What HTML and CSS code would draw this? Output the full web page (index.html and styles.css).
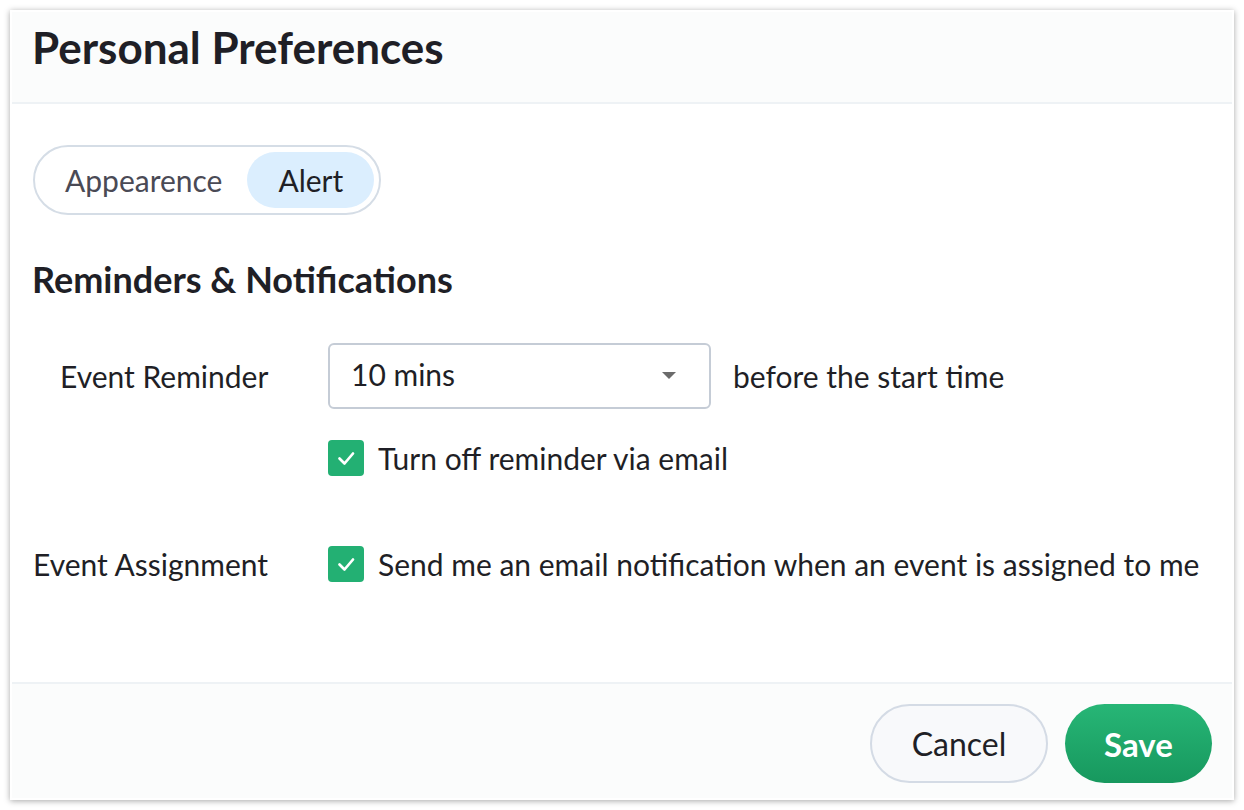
FILE: index.html
```html
<!DOCTYPE html>
<html>
<head>
<meta charset="utf-8">
<link rel="stylesheet" href="styles.css">
</head>
<body>
<div class="card">
  <div class="header"><h1 class="title">Personal Preferences</h1></div>
  <div class="body">
    <div class="tabs">
      <span class="tab">Appearence</span>
      <span class="tab active">Alert</span>
    </div>
    <h2 class="section">Reminders &amp; Notifications</h2>
    <div class="row row-reminder">
      <div class="label indent">Event Reminder</div>
      <div class="field">
        <div class="select-line">
          <div class="select"><span class="value">10 mins</span><span class="caret"></span></div>
          <span class="after">before the start time</span>
        </div>
        <div class="check-line">
          <span class="check"><svg viewBox="0 0 36 36" width="36" height="36"><path d="M11.5 18.5L16.5 23.5L25 13.5" fill="none" stroke="#fff" stroke-width="2.7" stroke-linecap="round" stroke-linejoin="round"/></svg></span>
          <span class="check-text">Turn off reminder via email</span>
        </div>
      </div>
    </div>
    <div class="row row-assign">
      <div class="label">Event Assignment</div>
      <div class="check-line">
        <span class="check"><svg viewBox="0 0 36 36" width="36" height="36"><path d="M11.5 18.5L16.5 23.5L25 13.5" fill="none" stroke="#fff" stroke-width="2.7" stroke-linecap="round" stroke-linejoin="round"/></svg></span>
        <span class="check-text">Send me an email notification when an event is assigned to me</span>
      </div>
    </div>
  </div>
  <div class="footer">
    <button class="btn cancel">Cancel</button>
    <button class="btn save">Save</button>
  </div>
</div>
</body>
</html>
```
FILE: styles.css
```css
* { box-sizing: border-box; }
html, body { margin: 0; padding: 0; background: #ffffff; }
body { font-family: Lato, "Noto Sans", sans-serif; color: #1f1f26; }

.card {
  margin: 10px;
  width: 1224px;
  height: 790px;
  background: #fff;
  padding: 2px;
  display: flex;
  flex-direction: column;
  box-shadow: 0 1px 6px rgba(0,0,0,0.35);
}

.header {
  height: 92px;
  flex: none;
  background: #fbfcfc;
  border-bottom: 2px solid #eef2f5;
  padding: 0 20px;
}
.title {
  margin: 9px 0 0;
  font-size: 44px;
  font-weight: 700;
  line-height: 52px;
  color: #1f1f26;
}

.body {
  flex: 1;
  padding: 41px 21px 0;
}

.tabs {
  display: inline-flex;
  align-items: center;
  height: 70px;
  border: 2px solid #d5dde6;
  border-radius: 35px;
  padding: 0 5px;
}
.tab {
  font-size: 30px;
  color: #4a4a55;
  padding: 0 25px;
  height: 56px;
  line-height: 56px;
  border-radius: 28px;
  white-space: nowrap;
}
.tab.active {
  background: #dbeefe;
  color: #1f1f26;
  padding: 0 31px;
}

.section {
  margin: 42px 0 0 -1px;
  font-size: 36px;
  font-weight: 700;
  line-height: 44px;
  color: #1f1f26;
}

.row {
  display: flex;
  align-items: flex-start;
}
.row-reminder { margin-top: 42px; }
.row-assign { margin-top: 70px; align-items: center; }

.label {
  width: 295px;
  flex: none;
  font-size: 30px;
  line-height: 36px;
  color: #1f1f26;
  white-space: nowrap;
}
.label.indent { padding-left: 27px; padding-top: 15px; }

.select-line {
  display: flex;
  align-items: center;
  gap: 22px;
}
.select {
  width: 383px;
  height: 66px;
  border: 2px solid #c5ccd6;
  border-radius: 6px;
  display: flex;
  align-items: center;
  justify-content: space-between;
  padding: 0 33px 0 21px;
  font-size: 30px;
  line-height: 36px;
  color: #1f1f26;
  background: #fff;
}
.value { margin-top: -5px; }
.caret {
  width: 0; height: 0;
  border-left: 7px solid transparent;
  border-right: 7px solid transparent;
  border-top: 7px solid #6b6b6b;
  margin-top: -2px;
}
.after { font-size: 30px; line-height: 36px; color: #1f1f26; white-space: nowrap; }

.check-line {
  display: flex;
  align-items: center;
  gap: 14px;
}
.field .check-line { margin-top: 31px; }
.check {
  width: 36px;
  height: 36px;
  flex: none;
  border-radius: 4px;
  background: #23b073;
  display: flex;
}
.check-text { font-size: 30px; line-height: 36px; color: #1f1f26; white-space: nowrap; }

.footer {
  height: 116px;
  flex: none;
  background: #fbfcfc;
  border-top: 2px solid #eef2f5;
  display: flex;
  justify-content: flex-end;
  align-items: flex-start;
  padding: 20px 20px 0;
  gap: 17px;
}
.btn {
  height: 79px;
  border-radius: 40px;
  font-family: Lato, "Noto Sans", sans-serif;
  font-size: 32px;
  line-height: 38px;
  padding: 0;
  cursor: pointer;
}
.cancel {
  width: 178px;
  border: 2px solid #d4dbe5;
  background: #f8f9fb;
  color: #1f1f26;
  font-weight: 400;
}
.save {
  width: 147px;
  border: none;
  background: linear-gradient(#27b676, #17985e);
  color: #fff;
  font-size: 33px;
  font-weight: 700;
}
```
